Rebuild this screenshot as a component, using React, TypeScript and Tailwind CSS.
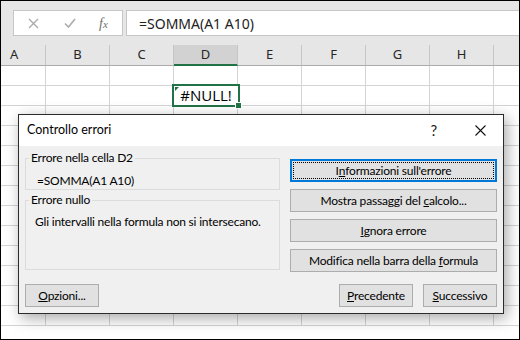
import React from 'react';

const cols = ['B', 'C', 'D', 'E', 'F', 'G', 'H'];
const rows = Array.from({ length: 13 }, (_, i) => i);

const Btn: React.FC<{ className?: string; children: React.ReactNode; focused?: boolean }> = ({ className = '', children, focused }) =>
  focused ? (
    <button className={`h-[23px] border-2 border-[#0078d7] bg-[#e1e1e1] p-px ${className}`}>
      <span className="flex h-full w-full items-center justify-center border border-dotted border-black">{children}</span>
    </button>
  ) : (
    <button className={`flex h-[23px] items-center justify-center border border-[#adadad] bg-[#e1e1e1] ${className}`}>
      {children}
    </button>
  );

export default function App() {
  return (
    <div className="relative h-[340px] w-[520px] overflow-hidden border border-black bg-white font-['Noto_Sans',sans-serif] text-black">
      {/* Formula bar */}
      <div className="flex h-[44px] bg-[#e6e6e6] pl-[12px] pt-[9px]">
        <div className="flex h-[26px] w-[110px] items-center border border-[#c6c6c6] bg-white">
          <svg className="ml-[14px]" width="11" height="11" viewBox="0 0 11 11">
            <path d="M1 1L10 10M10 1L1 10" stroke="#ababab" strokeWidth="1.4" />
          </svg>
          <svg className="ml-[25px]" width="12" height="10" viewBox="0 0 12 10">
            <path d="M1 5.5L4.5 9L11 1" stroke="#ababab" strokeWidth="1.6" fill="none" />
          </svg>
          <span className="ml-[23px] font-['Liberation_Serif',serif] text-[14px] italic text-[#707070]">
            f<span className="text-[11px]">x</span>
          </span>
        </div>
        <div className="ml-[3px] flex h-[26px] flex-1 items-center border border-r-0 border-[#c6c6c6] bg-white pl-[12px] text-[14px] text-[#222]">
          =SOMMA(A1 A10)
        </div>
      </div>

      {/* Column headers */}
      <div className="flex h-[21px] bg-[#e6e6e6] text-[13px] text-[#262626]">
        <div className="flex w-[45px] items-center border-r border-b border-r-[#c6c6c6] border-b-[#ababab] pl-[9px]">A</div>
        {cols.map((c) =>
          c === 'D' ? (
            <div key={c} className="flex w-[64px] items-center justify-center border-r border-b-2 border-r-[#c6c6c6] border-b-[#217346] bg-[#d2d2d2]">
              {c}
            </div>
          ) : (
            <div key={c} className="flex w-[64px] items-center justify-center border-r border-b border-r-[#c6c6c6] border-b-[#ababab]">
              {c}
            </div>
          )
        )}
        <div className="flex-1 border-b border-b-[#ababab]" />
      </div>

      {/* Grid */}
      {rows.map((r) => (
        <div key={r} className="flex h-[20px]">
          <div className="w-[45px] border-r border-b border-[#d4d4d4]" />
          {cols.map((c) => (
            <div key={c} className="w-[64px] border-r border-b border-[#d4d4d4]" />
          ))}
          <div className="flex-1 border-b border-[#d4d4d4]" />
        </div>
      ))}

      {/* Selected cell D2 */}
      <div className="absolute left-[171px] top-[83px] flex h-[23px] w-[68px] items-center justify-center border-2 border-[#217346] bg-white text-[15px] font-['Open_Sans',sans-serif] text-black">
        <svg className="absolute left-[1px] top-[1px]" width="4" height="4" viewBox="0 0 4 4">
          <path d="M0 0H4L0 4Z" fill="#217346" />
        </svg>
        #NULL!
        <span className="absolute -bottom-[4px] -right-[4px] h-[7px] w-[7px] border border-white bg-[#217346]" />
      </div>

      {/* Error check dialog */}
      <div className="absolute left-[17px] top-[113px] flex h-[200px] w-[486px] flex-col whitespace-nowrap border border-[#2b2b2b] bg-[#f0f0f0] font-['Lato',sans-serif] text-[12px] tracking-[-0.2px] shadow-[3px_4px_14px_rgba(0,0,0,0.35)]">
        <div className="flex h-[31px] items-center bg-white pl-[8px] pr-[17px]">
          <span className="flex-1 text-[12.5px] tracking-normal">Controllo errori</span>
          <span className="mr-[38px] text-[15px] text-[#222]">?</span>
          <svg width="11" height="11" viewBox="0 0 11 11">
            <path d="M0.5 0.5L10.5 10.5M10.5 0.5L0.5 10.5" stroke="#111" strokeWidth="1.1" />
          </svg>
        </div>

        <div className="flex flex-1 flex-col px-[6px] pb-[6px]">
          <div className="flex gap-[10px]">
            <div className="flex w-[255px] flex-col gap-[2px] pt-[4px]">
              <fieldset className="h-[40px] border border-[#dcdcdc] px-[3px]">
                <legend className="px-[2px] leading-[16px]">Errore nella cella D2</legend>
                <div className="pl-[8px] pt-[7px] leading-[16px]">=SOMMA(A1 A10)</div>
              </fieldset>
              <fieldset className="h-[78px] border border-[#dcdcdc] px-[3px]">
                <legend className="px-[2px] leading-[16px]">Errore nullo</legend>
                <div className="pl-[6px] pt-[6px] leading-[16px]">Gli intervalli nella formula non si intersecano.</div>
              </fieldset>
            </div>
            <div className="flex flex-1 flex-col gap-[7px] pt-[13px]">
              <Btn focused>
                I<span className="underline">n</span>formazioni sull'errore
              </Btn>
              <Btn>
                Mostra passaggi del&nbsp;<span className="underline">c</span>alcolo...
              </Btn>
              <Btn>
                <span className="underline">I</span>gnora errore
              </Btn>
              <Btn>
                Modifica nella barra della&nbsp;<span className="underline">f</span>ormula
              </Btn>
            </div>
          </div>

          <div className="mt-auto flex">
            <Btn className="w-[74px]">
              <span className="underline">O</span>pzioni...
            </Btn>
            <Btn className="ml-auto w-[74px]">
              <span className="underline">P</span>recedente
            </Btn>
            <Btn className="ml-[10px] w-[74px]">
              <span className="underline">S</span>uccessivo
            </Btn>
          </div>
        </div>
      </div>
    </div>
  );
}
